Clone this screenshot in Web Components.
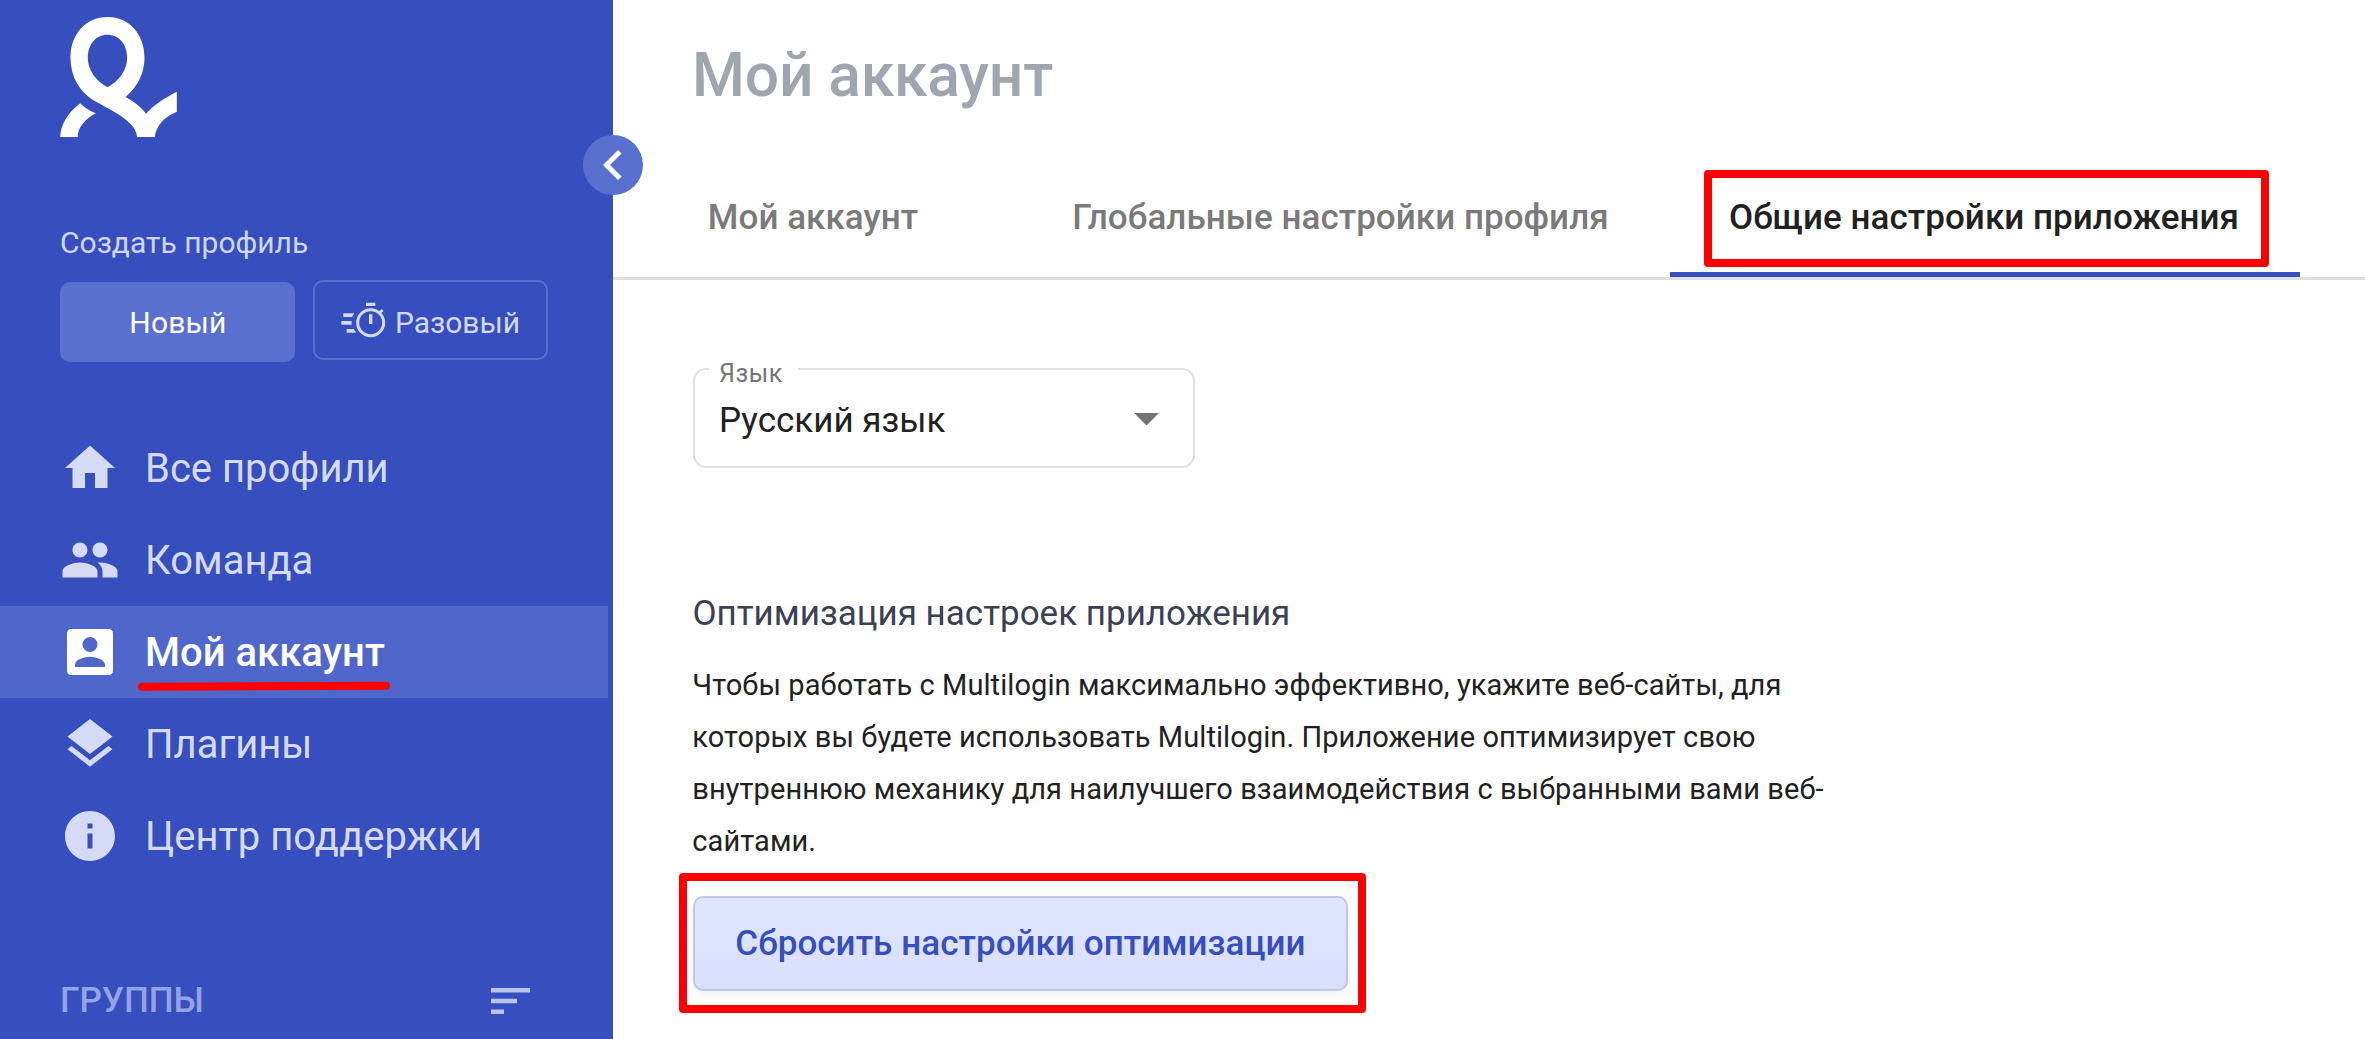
<!DOCTYPE html>
<html lang="ru">
<head>
<meta charset="utf-8">
<title>Мой аккаунт</title>
<style>
    html, body {
        margin: 0;
        height: 100%;
        overflow: hidden;
        background: #fff;
        font-family: Roboto, "Noto Sans", sans-serif;
    }
</style>
</head>
<body>
<account-app></account-app>

<script>
const icons = {
    home: '<path d="M10 20v-6h4v6h5v-8h3L12 3 2 12h3v8z"/>',
    people: '<path d="M16 11c1.66 0 2.99-1.34 2.99-3S17.66 5 16 5c-1.66 0-3 1.34-3 3s1.34 3 3 3zm-8 0c1.66 0 2.99-1.34 2.99-3S9.66 5 8 5C6.34 5 5 6.34 5 8s1.34 3 3 3zm0 2c-2.33 0-7 1.17-7 3.5V19h14v-2.5c0-2.33-4.67-3.5-7-3.5zm8 0c-.29 0-.62.02-.97.05 1.16.84 1.97 1.97 1.97 3.45V19h6v-2.5c0-2.33-4.67-3.5-7-3.5z"/>',
    account: '<path fill-rule="evenodd" d="M4.5 2.800h15c.99 0 1.7.7 1.7 1.7v15c0 1-.7 1.7-1.7 1.7h-15c-1 0-1.7-.7-1.7-1.7v-15c0-1 .7-1.7 1.7-1.7zM12 6a3 3 0 1 0 0 6 3 3 0 1 0 0-6zM6 18h12v-1c0-2-4-3.1-6-3.1S6 15 6 17z"/>',
    layers: '<path d="M11.99 18.54l-7.37-5.73L3 14.07l9 7 9-7-1.63-1.27-7.38 5.74zM12 16l7.36-5.73L21 9l-9-7-9 7 1.63 1.27L12 16z"/>',
    info: '<path d="M12 2C6.48 2 2 6.48 2 12s4.48 10 10 10 10-4.48 10-10S17.52 2 12 2zm1 15h-2v-6h2v6zm0-8h-2V7h2v2z"/>'
};

class AppLogo extends HTMLElement {
    constructor () {
        super();
        this.attachShadow({ mode: 'open' }).innerHTML = `
            <style>
                :host { display: block; width: 117px; height: 120px; }
                svg { display: block; }
            </style>
            <svg width="117" height="120" viewBox="60 50 350 360" fill="#fff">
                <path fill-rule="evenodd" d="M202 50C136 50 91 103 91 172C91 228 117 272 160 300C178 311 196 319 214 330C256 353 289 380 291 410H344C347 378 370 350 410 334V274C370 295 339 315 318 340C301 319 278 301 256 290C295 257 313 215 313 172C313 103 268 50 202 50ZM202 103C238 103 261 133 261 172C261 210 236 242 202 261C168 242 143 210 143 172C143 133 166 103 202 103Z"/>
                <path d="M120 309C134 323 150 333 167 339C135 357 112 381 113 410H60C62 370 85 336 120 309Z"/>
            </svg>
        `;
    }
}

class CollapseButton extends HTMLElement {
    constructor () {
        super();
        this.attachShadow({ mode: 'open' }).innerHTML = `
            <style>
                :host { display: block; width: 60px; height: 60px; border-radius: 50%; background: #5a70ce; }
                svg { display: block; }
            </style>
            <svg width="60" height="60" viewBox="0 0 24 24" fill="#fff">
                <path d="M15.41 7.41L14 6l-6 6 6 6 1.41-1.41L10.83 12z"/>
            </svg>
        `;
    }
}

class CreateButton extends HTMLElement {
    constructor () {
        super();
        this.attachShadow({ mode: 'open' }).innerHTML = `
            <style>
                :host {
                    display: flex;
                    box-sizing: border-box;
                    width: 235px;
                    height: 80px;
                    align-items: center;
                    justify-content: center;
                    gap: 9px;
                    border-radius: 10px;
                    font-size: 30px;
                    line-height: 40px;
                }
                :host([kind=filled]) { margin-top: 2px; padding: 1px 0 0 1px; background: #5a70ce; color: #fff; letter-spacing: 0.2px; }
                :host([kind=outlined]) { padding-top: 5px; border: 2px solid #5a70ce; color: #d3daf7; }
            </style>
            <slot name="icon"></slot>
            <slot></slot>
        `;
    }
}

class TimerIcon extends HTMLElement {
    constructor () {
        super();
        this.attachShadow({ mode: 'open' }).innerHTML = `
            <style>
                :host { display: block; margin-top: -5px; }
                svg { display: block; }
            </style>
            <svg width="45" height="36" viewBox="122 99 135 108" fill="currentColor">
                <circle cx="211" cy="161" r="39" fill="none" stroke="currentColor" stroke-width="9"/>
                <path d="M197 101h28v10h-28zM206 136h10v29h-10z"/>
                <path d="M129 133h33l-7 11h-26zM123 156h31v11h-31zM139 180h21l8 11h-29z"/>
                <path d="M236 133l11 -10" stroke="currentColor" stroke-width="8"/>
            </svg>
        `;
    }
}

class NavItem extends HTMLElement {
    constructor () {
        super();
        this.attachShadow({ mode: 'open' }).innerHTML = `
            <style>
                :host {
                    display: flex;
                    position: relative;
                    box-sizing: border-box;
                    width: 608px;
                    height: 92px;
                    padding-left: 60px;
                    align-items: center;
                    gap: 25px;
                    color: #d5dbf4;
                    font-size: 40px;
                    line-height: 48px;
                }
                :host([active]) { background: #4f67cb; color: #fff; font-weight: 500; }
                svg { display: block; flex: none; }
                .text { padding-top: 2px; }
            </style>
            <svg width="60" height="60" viewBox="0 0 24 24" fill="currentColor">${icons[this.getAttribute('icon')]}</svg>
            <span class="text"><slot></slot></span>
            <slot name="mark"></slot>
        `;
    }
}

// hand-drawn red line under a menu item
class MarkLine extends HTMLElement {
    constructor () {
        super();
        this.attachShadow({ mode: 'open' }).innerHTML = `
            <style>
                :host { display: block; position: absolute; left: 136px; top: 74px; }
                svg { display: block; }
            </style>
            <svg width="258" height="14">
                <path d="M6 6.7L250 5.7" stroke="#f00" stroke-width="8" stroke-linecap="round"/>
            </svg>
        `;
    }
}

// red frame laid over its parent
class MarkFrame extends HTMLElement {
    constructor () {
        super();
        this.attachShadow({ mode: 'open' }).innerHTML = `
            <style>
                :host {
                    display: block;
                    position: absolute;
                    box-sizing: border-box;
                    border: 8px solid #f00;
                    border-radius: 4px;
                }
            </style>
        `;
    }
}

class GroupsHeader extends HTMLElement {
    constructor () {
        super();
        this.attachShadow({ mode: 'open' }).innerHTML = `
            <style>
                :host {
                    display: flex;
                    justify-content: space-between;
                    align-items: center;
                    margin: 98px 83px 0 60px;
                    color: #94a3e3;
                    font-size: 35px;
                    font-weight: 500;
                    line-height: 40px;
                }
                span { padding-top: 1px; }
                svg { display: block; }
            </style>
            <span><slot></slot></span>
            <svg width="39" height="26" fill="#b9c5f0">
                <path d="M0 0h39v4.5H0zM0 10.8h26v4.4H0zM0 21.5h13V26H0z"/>
            </svg>
        `;
    }
}

class SideBar extends HTMLElement {
    constructor () {
        super();
        this.attachShadow({ mode: 'open' }).innerHTML = `
            <style>
                :host {
                    display: flex;
                    position: relative;
                    flex: none;
                    flex-direction: column;
                    box-sizing: border-box;
                    width: 613px;
                    height: 100%;
                    padding-top: 17px;
                    background: #374ebf;
                }
                app-logo { margin-left: 60px; }
                collapse-button { position: absolute; right: -30px; top: 135px; z-index: 1; }
                .caption { margin: 86px 0 0 60px; color: #d0d7f5; font-size: 30px; line-height: 40px; }
                .create { display: flex; align-items: flex-start; gap: 18px; height: 82px; margin: 17px 0 60px 60px; }
            </style>
            <app-logo></app-logo>
            <collapse-button></collapse-button>
            <div class="caption">Создать профиль</div>
            <div class="create">
                <create-button kind="filled">Новый</create-button>
                <create-button kind="outlined"><timer-icon slot="icon"></timer-icon>Разовый</create-button>
            </div>
            <nav>
                <nav-item icon="home">Все профили</nav-item>
                <nav-item icon="people">Команда</nav-item>
                <nav-item icon="account" active>Мой аккаунт<mark-line slot="mark"></mark-line></nav-item>
                <nav-item icon="layers">Плагины</nav-item>
                <nav-item icon="info">Центр поддержки</nav-item>
            </nav>
            <groups-header>ГРУППЫ</groups-header>
        `;
    }
}

class TabItem extends HTMLElement {
    constructor () {
        super();
        this.attachShadow({ mode: 'open' }).innerHTML = `
            <style>
                :host {
                    display: flex;
                    position: relative;
                    box-sizing: border-box;
                    height: 120px;
                    padding-top: 2px;
                    flex: none;
                    align-items: center;
                    justify-content: center;
                    color: #7a7a7a;
                    font-size: 35px;
                    font-weight: 500;
                    line-height: 40px;
                    letter-spacing: 0.04px;
                    white-space: nowrap;
                }
                :host([active]) { padding: 7px 2px 0 0; border-bottom: 5px solid #374ebf; color: #212121; }
            </style>
            <slot></slot>
            <slot name="mark"></slot>
        `;
    }
}

class SelectField extends HTMLElement {
    constructor () {
        super();
        this.attachShadow({ mode: 'open' }).innerHTML = `
            <style>
                :host {
                    display: flex;
                    position: relative;
                    box-sizing: border-box;
                    width: 502px;
                    height: 100px;
                    padding: 5px 34px 0 24px;
                    align-items: center;
                    justify-content: space-between;
                    border: 2px solid #e0e0e0;
                    border-radius: 13px;
                    color: #212121;
                    font-size: 35px;
                    line-height: 40px;
                }
                .label {
                    position: absolute;
                    left: 14px;
                    top: -12px;
                    width: 79px;
                    padding-left: 10px;
                    background: #fff;
                    color: #757575;
                    font-size: 25px;
                    line-height: 32px;
                    letter-spacing: 0.6px;
                }
                svg { display: block; margin-top: -3px; }
            </style>
            <span class="label">${this.getAttribute('label')}</span>
            <slot></slot>
            <svg width="25" height="13" fill="#757575"><path d="M0 0h25L12.5 12.5z"/></svg>
        `;
    }
}

class ActionButton extends HTMLElement {
    constructor () {
        super();
        this.attachShadow({ mode: 'open' }).innerHTML = `
            <style>
                :host {
                    display: flex;
                    position: relative;
                    box-sizing: border-box;
                    width: 655px;
                    height: 95px;
                    align-items: center;
                    justify-content: center;
                    border: 2px solid #bfc8e8;
                    border-radius: 10px;
                    background: linear-gradient(#e0e6ff, #dadefd);
                    box-shadow: 0 3px 6px rgba(55, 78, 191, 0.08);
                    color: #374ebf;
                    font-size: 35px;
                    font-weight: 500;
                    line-height: 40px;
                    letter-spacing: 0.05px;
                }
            </style>
            <slot></slot>
            <slot name="mark"></slot>
        `;
    }
}

class AccountPage extends HTMLElement {
    constructor () {
        super();
        this.attachShadow({ mode: 'open' }).innerHTML = `
            <style>
                :host { display: block; flex: 1; min-width: 0; }
                h1 {
                    box-sizing: border-box;
                    height: 157px;
                    margin: 0;
                    padding: 41px 0 0 79px;
                    color: #9fa6af;
                    font-size: 60.5px;
                    font-weight: 500;
                    line-height: 70px;
                    letter-spacing: -0.15px;
                }
                .tabs { display: flex; padding-left: 2px; border-bottom: 3px solid #e0e0e0; }
                .content { padding: 88px 0 0 80px; }
                h2 {
                    margin: 126px 0 25px -0.5px;
                    color: #3c4052;
                    font-size: 35px;
                    font-weight: 400;
                    line-height: 40px;
                }
                p {
                    width: 1140px;
                    margin: 0 0 29px -0.7px;
                    color: #212121;
                    font-size: 29px;
                    line-height: 52px;
                    letter-spacing: 0.08px;
                }
            </style>
            <h1>Мой аккаунт</h1>
            <div class="tabs">
                <tab-item style="width: 396px">Мой аккаунт</tab-item>
                <tab-item style="width: 659px">Глобальные настройки профиля</tab-item>
                <tab-item style="width: 630px" active>Общие настройки приложения<mark-frame slot="mark" style="left: 33.5px; top: 13px; width: 565px; height: 97px"></mark-frame></tab-item>
            </div>
            <div class="content">
                <select-field label="Язык">Русский язык</select-field>
                <h2>Оптимизация настроек приложения</h2>
                <p>Чтобы работать с Multilogin максимально эффективно, укажите веб-сайты, для которых вы будете использовать Multilogin. Приложение оптимизирует свою внутреннюю механику для наилучшего взаимодействия с выбранными вами веб-сайтами.</p>
                <action-button>Сбросить настройки оптимизации<mark-frame slot="mark" style="left: -16px; top: -25px; width: 687px; height: 140px"></mark-frame></action-button>
            </div>
        `;
    }
}

class AccountApp extends HTMLElement {
    constructor () {
        super();
        this.attachShadow({ mode: 'open' }).innerHTML = `
            <style>
                :host { display: flex; height: 100%; }
            </style>
            <side-bar></side-bar>
            <account-page></account-page>
        `;
    }
}

customElements.define('app-logo', AppLogo);
customElements.define('collapse-button', CollapseButton);
customElements.define('create-button', CreateButton);
customElements.define('timer-icon', TimerIcon);
customElements.define('nav-item', NavItem);
customElements.define('mark-line', MarkLine);
customElements.define('mark-frame', MarkFrame);
customElements.define('groups-header', GroupsHeader);
customElements.define('side-bar', SideBar);
customElements.define('tab-item', TabItem);
customElements.define('select-field', SelectField);
customElements.define('action-button', ActionButton);
customElements.define('account-page', AccountPage);
customElements.define('account-app', AccountApp);
</script>
</body>
</html>
